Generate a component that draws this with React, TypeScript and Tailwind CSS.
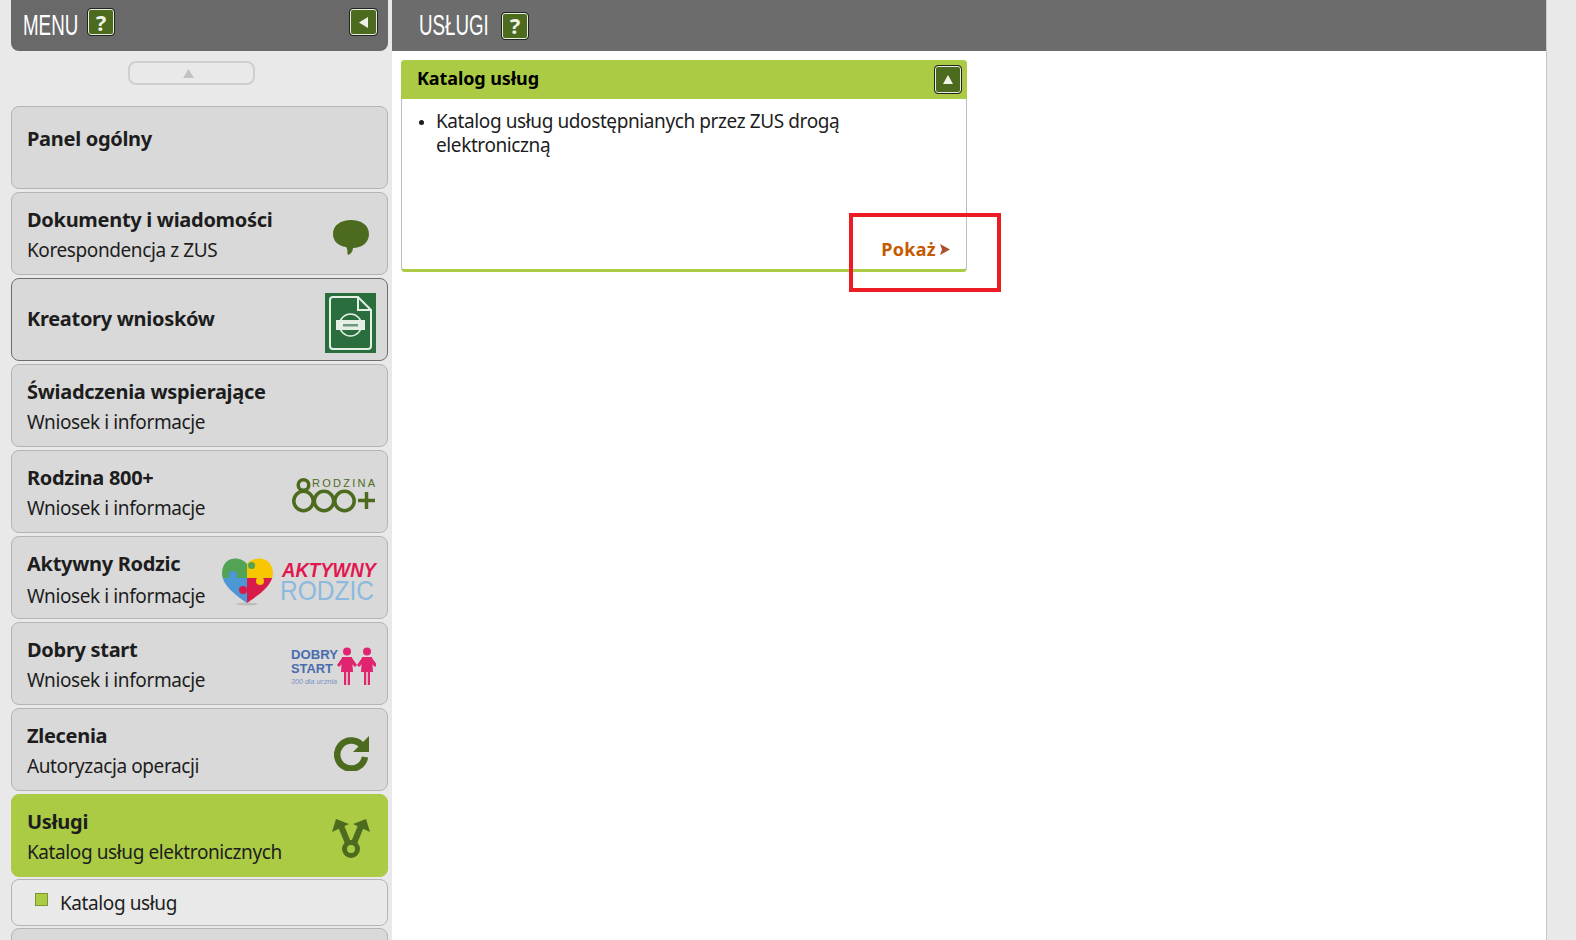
import type { ReactNode } from 'react';

const FONT = 'font-["Noto_Sans","Liberation_Sans",sans-serif]';

function GreenButton({ children, className = '' }: { children: ReactNode; className?: string }) {
  return (
    <div className={`flex items-center justify-center rounded-[4px] border border-[#222] bg-[#4d6b1f] shadow-[inset_0_0_0_1px_#e8eee0] ${className}`}>
      {children}
    </div>
  );
}

function Bubble() {
  return (
    <svg width="37" height="36" viewBox="0 0 37 36" className="mr-[17px] mt-[8px]">
      <path d="M18 0C28 0 36 5 36 14C36 23 28 28 20 28C20 31 18 34 15 35C14 33 15 29 13 27C5 26 0 21 0 14C0 5 8 0 18 0Z" fill="#4d6b1f" />
    </svg>
  );
}

function DocIcon() {
  return (
    <svg width="51" height="60" viewBox="0 0 51 60" className="mr-[11px] mt-[6px]">
      <rect width="51" height="60" fill="#2a6e3e" />
      <path d="M8 4H33L46 17V53Q46 56 43 56H8Q5 56 5 53V7Q5 4 8 4Z" fill="none" stroke="#e4efe6" strokeWidth="2" />
      <path d="M33 4V17H46" fill="none" stroke="#e4efe6" strokeWidth="2" />
      <circle cx="25.500" cy="32" r="11" fill="none" stroke="#e4efe6" strokeWidth="1.500" />
      <rect x="11" y="27" width="29" height="10" fill="#e4efe6" />
      <rect x="18" y="31" width="15" height="2.500" fill="#6f9a7c" />
    </svg>
  );
}

function Rodzina() {
  return (
    <svg width="84" height="37" viewBox="0 0 84 37" className="mr-[11px] mt-[7px]">
      <g fill="none" stroke="#4d6b1f" strokeWidth="3.500">
        <circle cx="11.500" cy="8" r="5.300" />
        <circle cx="11.500" cy="24" r="9.700" />
        <circle cx="32" cy="24" r="9.700" />
        <circle cx="52.500" cy="24" r="9.700" />
      </g>
      <path d="M66 23.500H83M74.500 15V32" stroke="#4d6b1f" strokeWidth="3.500" />
      <text x="20" y="10" fontSize="11" fill="#4d6b1f" textLength="63" fontFamily="Liberation Sans, sans-serif">RODZINA</text>
    </svg>
  );
}

function Aktywny() {
  return (
    <svg width="157" height="52" viewBox="0 0 157 52" className="mr-[11px] mt-[3px] overflow-visible">
      <defs>
        <clipPath id="heart">
          <path d="M28 11C22 3 4 2 3 20C3 33 18 43 28 50C38 43 54 33 54 20C53 2 34 3 28 11Z" />
        </clipPath>
      </defs>
      <ellipse cx="28" cy="51" rx="11" ry="1.500" fill="#bdbdbd" />
      <g clipPath="url(#heart)">
        <rect x="0" y="0" width="28" height="25" fill="#52a356" />
        <rect x="28" y="0" width="28" height="25" fill="#f7c600" />
        <rect x="0" y="25" width="28" height="28" fill="#4c97d5" />
        <rect x="28" y="25" width="28" height="28" fill="#d81b4a" />
        <circle cx="32.500" cy="12.500" r="3.500" fill="#52a356" />
        <circle cx="14" cy="22" r="4" fill="#4c97d5" />
        <circle cx="41" cy="28" r="4" fill="#f7c600" />
        <circle cx="24" cy="37" r="4" fill="#d81b4a" />
      </g>
      <text x="63" y="24" fontSize="21" fontWeight="700" fontStyle="italic" fill="#e0184f" textLength="94" lengthAdjust="spacingAndGlyphs" fontFamily="Liberation Sans, sans-serif">AKTYWNY</text>
      <text x="61" y="47" fontSize="28" fill="#8db9de" textLength="94" lengthAdjust="spacingAndGlyphs" fontFamily="Liberation Sans, sans-serif">RODZIC</text>
    </svg>
  );
}

function Child({ x }: { x: number }) {
  return (
    <g fill="#e0246f" transform={`translate(${x} 0)`}>
      <circle cx="8" cy="4.500" r="4" />
      <path d="M3 10H13L14 25H11V38H8.800V25H7.200V38H5V25H2Z" />
      <path d="M3 11L-2 18L0 20L4 16ZM13 11L18 18L16 20L12 16Z" />
    </g>
  );
}

function DobryStart() {
  return (
    <svg width="87" height="40" viewBox="0 0 87 40" className="mr-[11px] mt-[7px]">
      <text x="2" y="12" fontSize="13.500" fontWeight="700" fill="#4a6cae" textLength="47" lengthAdjust="spacingAndGlyphs" fontFamily="Liberation Sans, sans-serif">DOBRY</text>
      <text x="2" y="26" fontSize="13.500" fontWeight="700" fill="#4a6cae" textLength="42" lengthAdjust="spacingAndGlyphs" fontFamily="Liberation Sans, sans-serif">START</text>
      <text x="2" y="37" fontSize="8" fontStyle="italic" fill="#7a93c6" textLength="46" lengthAdjust="spacingAndGlyphs" fontFamily="Liberation Sans, sans-serif">300 dla ucznia</text>
      <Child x={50} />
      <Child x={70} />
    </svg>
  );
}

function RefreshIcon() {
  return (
    <svg width="36" height="36" viewBox="0 0 36 36" className="mr-[17px] mt-[7px]">
      <path d="M29 12A14 14 0 1 0 31 22" fill="none" stroke="#4d6b1f" strokeWidth="6.500" />
      <path d="M35 1V17H19Z" fill="#4d6b1f" />
    </svg>
  );
}

function ForkIcon() {
  return (
    <svg width="38" height="40" viewBox="0 0 38 40" className="mr-[17px] mt-[5px]">
      <g fill="#4d6b1f">
        <path d="M0 14L4 1L17 6Z" />
        <path d="M38 14L34 1L21 6Z" />
      </g>
      <path d="M9 8L16 25M29 8L22 25" stroke="#4d6b1f" strokeWidth="6" />
      <circle cx="19" cy="31" r="6.500" fill="none" stroke="#4d6b1f" strokeWidth="5" />
    </svg>
  );
}

const items: { title: string; sub?: string; icon?: ReactNode; dark?: boolean; active?: boolean }[] = [
  { title: 'Panel ogólny' },
  { title: 'Dokumenty i wiadomości', sub: 'Korespondencja z ZUS', icon: <Bubble /> },
  { title: 'Kreatory wniosków', icon: <DocIcon />, dark: true },
  { title: 'Świadczenia wspierające', sub: 'Wniosek i informacje' },
  { title: 'Rodzina 800+', sub: 'Wniosek i informacje', icon: <Rodzina /> },
  { title: 'Aktywny Rodzic', sub: 'Wniosek i informacje', icon: <Aktywny /> },
  { title: 'Dobry start', sub: 'Wniosek i informacje', icon: <DobryStart /> },
  { title: 'Zlecenia', sub: 'Autoryzacja operacji', icon: <RefreshIcon /> },
  { title: 'Usługi', sub: 'Katalog usług elektronicznych', icon: <ForkIcon />, active: true },
];

function MenuItem({ title, sub, icon, dark, active }: (typeof items)[number]) {
  const single = title === 'Kreatory wniosków';
  const top = title === 'Panel ogólny';
  const lowSub = title === 'Aktywny Rodzic';
  return (
    <div
      className={`mb-[3px] flex h-[83px] items-center justify-between rounded-lg border ${
        active ? 'border-[#abca45] bg-[#abcb45]' : 'bg-[#d9d9d9]'
      } ${dark ? 'border-[#6e6e6e]' : active ? '' : 'border-[#b4b4b4]'}`}
    >
      <div className={`self-stretch pl-[15px] text-[#1d1d1d] ${single ? 'pt-[27px]' : top ? 'pt-[19px]' : 'pt-[14px]'}`}>
        <div className="text-[20px] leading-[26px] font-bold tracking-[-0.3px]">{title}</div>
        {sub && <div className={`text-[19px] leading-[26px] tracking-[-0.4px] ${lowSub ? 'mt-[6px]' : 'mt-[4px]'}`}>{sub}</div>}
      </div>
      {icon}
    </div>
  );
}

export default function App() {
  return (
    <div className={`flex h-[940px] overflow-hidden bg-[#e9e9e9] ${FONT}`}>
      <aside className="w-[392px] shrink-0 pl-[11px] pr-[4px]">
        <div className="flex h-[51px] items-center justify-between rounded-b-lg bg-[#696969] pl-3 pr-[10px]">
          <div className="flex items-center">
            <span className="mb-[3px] w-[53px] origin-left scale-x-[0.625] font-['Liberation_Sans',sans-serif] text-[30px] whitespace-nowrap text-white">MENU</span>
            <GreenButton className="mb-[7px] ml-[11px] h-[28px] w-[28px] text-[22px] font-bold text-[#eef2e8]">?</GreenButton>
          </div>
          <GreenButton className="mb-[7px] h-[28px] w-[29px]">
            <svg width="10" height="11" viewBox="0 0 10 11"><path d="M9 0V11L0 5.500Z" fill="#eef2e8" /></svg>
          </GreenButton>
        </div>
        <div className="mb-[21px] ml-[117px] mt-[10px] flex h-[24px] w-[127px] items-center justify-center rounded-lg border-2 border-[#cfcfcf]">
          <svg width="11" height="9" viewBox="0 0 11 9" className="mr-[6px]"><path d="M5.500 0L11 9H0Z" fill="#c2c2c2" /></svg>
        </div>
        {items.map((item) => (
          <MenuItem key={item.title} {...item} />
        ))}
        <div className="-mt-px mb-[2px] flex h-[47px] items-center rounded-lg border border-[#b4b4b4] bg-[#e9e9e9] pl-[23px] text-[#1d1d1d]">
          <span className="mb-[6px] h-[13px] w-[13px] border border-[#7d9336] bg-[#abcb45]" />
          <span className="ml-[12px] pt-[2px] text-[19px] tracking-[-0.4px]">Katalog usług</span>
        </div>
        <div className="h-[40px] rounded-lg border border-[#b4b4b4] bg-[#d9d9d9]" />
      </aside>

      <main className="w-[1155px] shrink-0 border-r border-[#c8c8c8] bg-white">
        <div className="flex h-[51px] items-center bg-[#6b6c6b] pl-[27px]">
          <span className="mb-[2px] w-[70px] origin-left scale-x-[0.625] font-['Liberation_Sans',sans-serif] text-[30px] whitespace-nowrap text-white">USŁUGI</span>
          <GreenButton className="ml-[12px] h-[28px] w-[28px] text-[22px] font-bold text-[#eef2e8]">?</GreenButton>
        </div>
        <section className="relative ml-[9px] mt-[9px] flex h-[212px] w-[566px] flex-col rounded-[4px] border-x border-b-[3px] border-x-[#b9c0c9] border-b-[#abcb45]">
          <div className="-mx-px flex h-[39px] items-center justify-between rounded-t-[4px] bg-[#abcb45] pl-[16px] pr-[5px]">
            <h2 className="pb-[2px] text-[18px] font-bold tracking-[-0.1px] text-black">Katalog usług</h2>
            <GreenButton className="mb-[1px] h-[29px] w-[28px]">
              <svg width="10" height="9" viewBox="0 0 10 9"><path d="M5 0L10 9H0Z" fill="#eef2e8" /></svg>
            </GreenButton>
          </div>
          <ul className="list-disc pl-[34px] pr-[100px] pt-[10px] text-[19px] leading-[24px] tracking-[-0.4px] text-[#1d1d1d] marker:text-[14px]">
            <li>Katalog usług udostępnianych przez ZUS drogą elektroniczną</li>
          </ul>
          <div className="mb-[6px] mt-auto flex items-center justify-end pr-[16px]">
            <span className="text-[18px] font-bold tracking-[0.3px] text-[#c55a00]">Pokaż</span>
            <svg width="10" height="11" viewBox="0 0 10 11" className="ml-[4px]"><path d="M0 0L10 5.500L0 11L2 5.500Z" fill="#a8502f" /></svg>
          </div>
          <div className="absolute left-[447px] top-[153px] h-[79px] w-[152px] border-[4px] border-[#ed1c24]" />
        </section>
      </main>
    </div>
  );
}
